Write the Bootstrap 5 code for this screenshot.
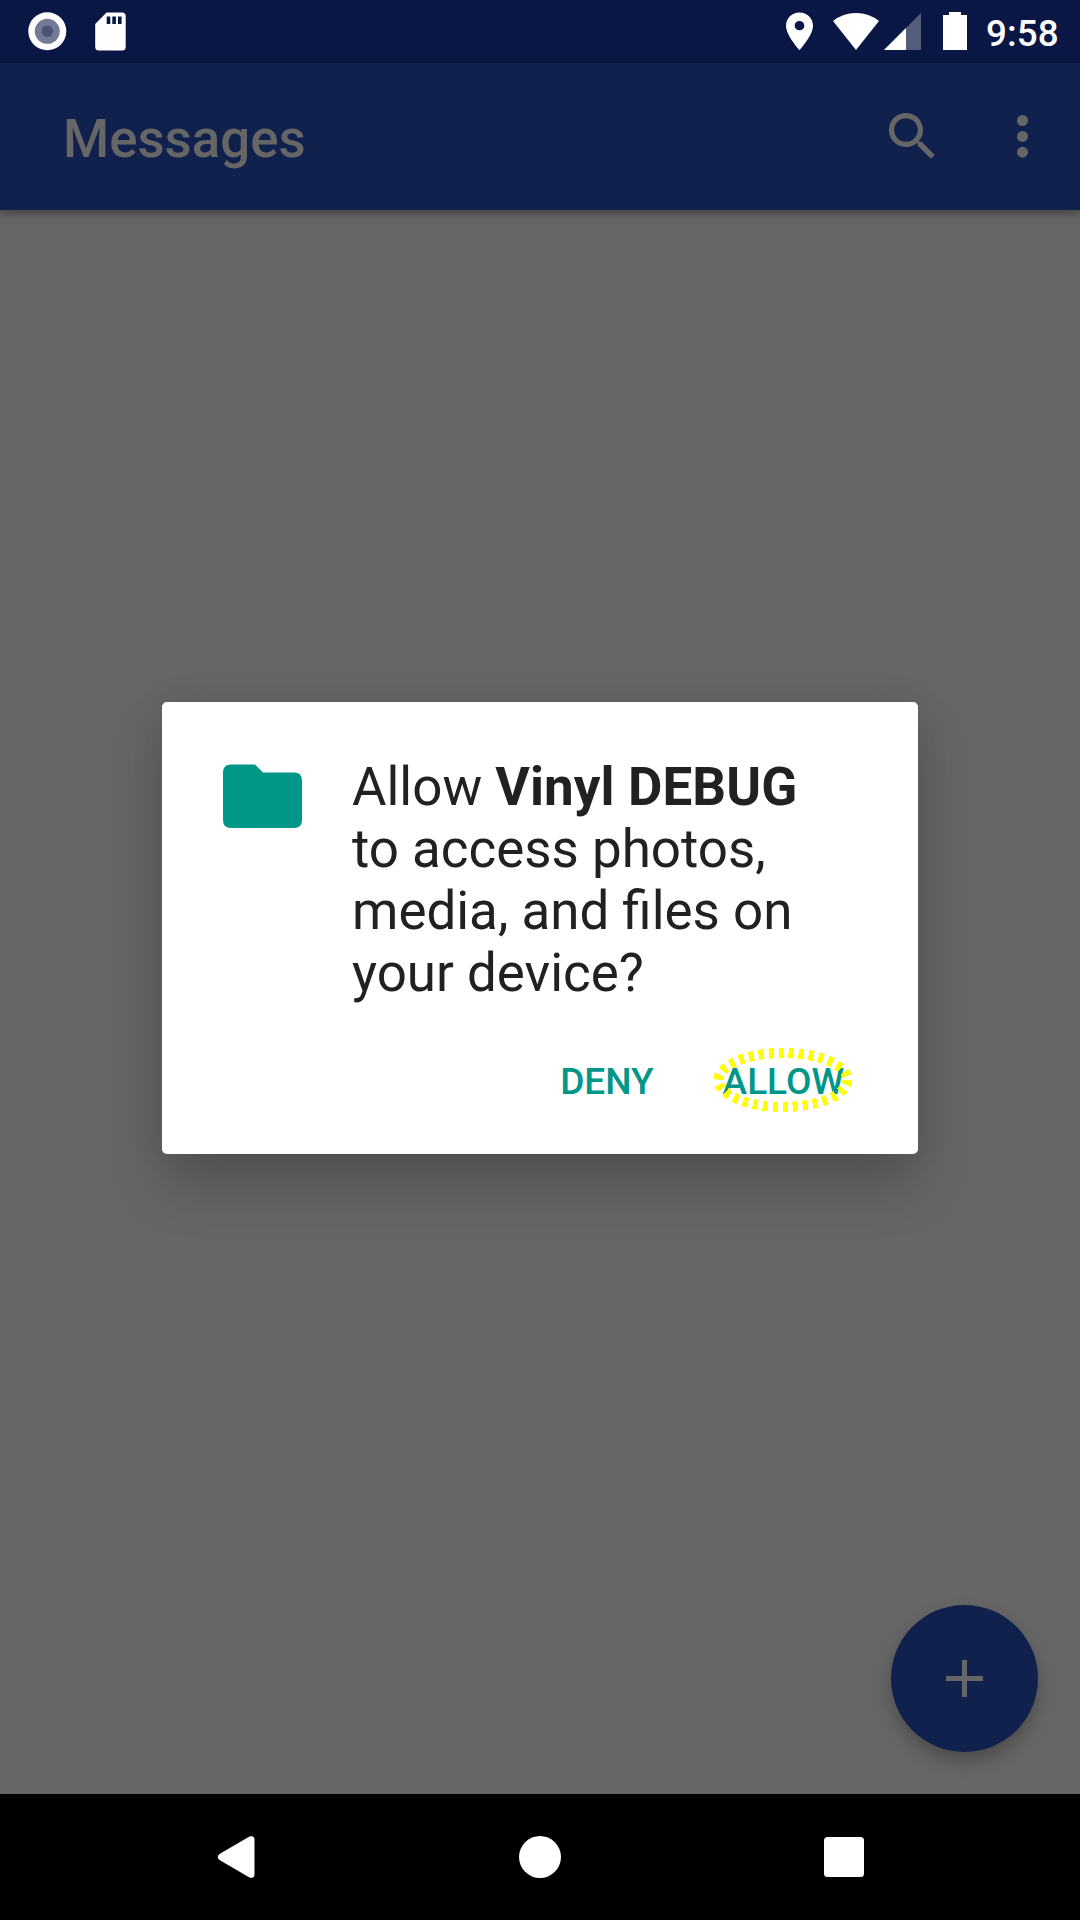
<!DOCTYPE html>
<html lang="en">
<head>
<meta charset="utf-8">
<meta name="viewport" content="width=device-width, initial-scale=1">
<title>Messages</title>
<link href="https://cdn.jsdelivr.net/npm/bootstrap@5.3.0/dist/css/bootstrap.min.css" rel="stylesheet">
<style>
  body { font-family: Roboto, "Liberation Sans", sans-serif; background: #666; color: #212121; }
  svg { display: block; flex: none; }
  .screen { width: 1080px; height: 1920px; }
  .status-bar { height: 63px; background: #0a1644; color: #fff; padding: 0 22px 0 28px; }
  .sys-icon { margin-bottom: 1px; }
  .sd-icon { margin-left: 28px; }
  .wifi-icon { margin-left: 20px; }
  .signal-icon { margin-left: 5px; }
  .battery-icon { margin-left: 22px; }
  .clock { font-size: 36.75px; font-weight: 500; line-height: 43px; padding-top: 4px; margin-left: 19px; width: 72px; letter-spacing: .1px; white-space: nowrap; }
  .app-bar { height: 147px; background: #11214d; color: #666; padding: 0 35px 0 63px; box-shadow: 0 3px 9px rgba(0,0,0,.38); z-index: 1; }
  .app-title { font-size: 52.8px; font-weight: 500; line-height: 62px; padding-top: 4px; }
  .search-icon { margin-right: 56px; }
  .content-area { padding-bottom: 148px; }
  .permission { width: 756px; height: 452px; border-radius: 5px; background: #fff; padding: 53px 53px 0 53px;
    box-shadow: 0 32px 54px rgba(0,0,0,.19), 0 0 36px rgba(0,0,0,.07); }
  .question { font-size: 52.9px; line-height: 62px; width: 480px; margin-left: 42px; padding-top: 1px; }
  .question b { font-weight: 700; letter-spacing: .12px; }
  .action-row { gap: 69px; margin-top: 56px; padding-right: 21px; }
  .action { font-size: 37px; font-weight: 500; line-height: 43px; color: #009688; background: none; border: 0; padding: 0; }
  .highlight { left: -9.5px; top: -13px; pointer-events: none; }
  .fab { right: 42px; bottom: 42px; width: 147px; height: 147px; border: 0; background: #11214d; box-shadow: 0 9px 17px rgba(0,0,0,.26); }
  .nav-keys { height: 126px; background: #000; padding: 0 216px 0 217px; }
</style>
<script src="https://cdn.jsdelivr.net/npm/bootstrap@5.3.0/dist/js/bootstrap.bundle.min.js"></script>
</head>
<body>
<div class="screen d-flex flex-column overflow-hidden">
  <div class="status-bar d-flex align-items-center">
    <svg width="39" height="39" viewBox="0 0 39 39"><circle cx="19.300" cy="19.300" r="19" fill="#fff"/><circle cx="19.300" cy="19.300" r="12.500" fill="#747a96"/><circle cx="19.300" cy="19.300" r="5.700" fill="#4a5277"/></svg>
    <svg class="sd-icon" width="31" height="39" viewBox="0 0 31 39"><path fill="#fff" fill-rule="evenodd" d="M11.500.5H27Q30.700.5 30.700 4V35Q30.700 38.500 27 38.500H4Q.2 38.500.2 35V12ZM11.700 4.500V12H15.300V4.500ZM17.300 4.500V12H20.900V4.500ZM23 4.500V12H26.600V4.500Z"/></svg>
    <svg class="sys-icon ms-auto" width="27" height="38" viewBox="5 1.700 14 20.300" preserveAspectRatio="none"><path fill="#fff" d="M12 2C8.130 2 5 5.130 5 9c0 5.250 7 13 7 13s7-7.750 7-13c0-3.870-3.130-7-7-7zm0 9.500a2.500 2.500 0 1 1 0-5 2.500 2.500 0 0 1 0 5z"/></svg>
    <svg class="sys-icon wifi-icon" width="46" height="38" viewBox="0 0 46 38"><path fill="#fff" d="M0 9Q10 1 23 1T46 9L23 38Z"/></svg>
    <svg class="sys-icon signal-icon" width="37" height="38" viewBox="0 0 37 38"><path fill="#545d7c" d="M37 1V38H0Z"/><path fill="#fff" d="M22 16V38H0Z"/></svg>
    <svg class="sys-icon battery-icon" width="24" height="38" viewBox="0 0 24 38"><path fill="#fff" d="M6 0H18V3H24V38H0V3H6Z"/></svg>
    <div class="clock">9:58</div>
  </div>

  <header class="app-bar d-flex align-items-center position-relative">
    <div class="app-title me-auto">Messages</div>
    <svg class="search-icon" width="63" height="63" viewBox="0 0 24 24"><path fill="#666" d="M15.500 14h-.79l-.28-.27A6.470 6.470 0 0 0 16 9.500 6.500 6.500 0 1 0 9.500 16c1.610 0 3.090-.59 4.230-1.570l.27.28v.79l5 4.990L20.490 19l-4.990-5zm-6 0C7.010 14 5 11.990 5 9.500S7.010 5 9.500 5 14 7.010 14 9.500 11.990 14 9.500 14z"/></svg>
    <svg width="45" height="63" viewBox="0 0 45 63"><g fill="#666"><circle cx="22.500" cy="15.500" r="5.500"/><circle cx="22.500" cy="31.400" r="5.500"/><circle cx="22.500" cy="47.200" r="5.500"/></g></svg>
  </header>

  <main class="content-area flex-fill position-relative d-flex align-items-center justify-content-center">
    <section class="permission d-flex flex-column" role="dialog" aria-label="Permission request">
      <div class="d-flex">
        <svg width="95" height="79" viewBox="0 0 95 79"><path fill="#009688" d="M16 9.500H40L48 17.500H79Q87 17.500 87 25.500V65Q87 73 79 73H16Q8 73 8 65V17.500Q8 9.500 16 9.500Z"/></svg>
        <div class="question">Allow <b>Vinyl DEBUG</b> to access photos, media, and files on your device?</div>
      </div>
      <div class="action-row d-flex justify-content-end">
        <button class="action">DENY</button>
        <button class="action position-relative">ALLOW
          <svg class="highlight position-absolute" width="140" height="66" viewBox="0 0 140 66" shape-rendering="crispEdges"><ellipse cx="70" cy="33" rx="64.500" ry="27" fill="none" stroke="#ff0" stroke-width="10" stroke-dasharray="5 5"/></svg>
        </button>
      </div>
    </section>
    <button class="fab position-absolute rounded-circle d-flex align-items-center justify-content-center p-0" aria-label="New message">
      <svg width="37" height="37" viewBox="0 0 37 37"><path fill="#666" d="M16 0H21V16H37V21H21V37H16V21H0V16H16Z"/></svg>
    </button>
  </main>

  <nav class="nav-keys d-flex align-items-center justify-content-between">
    <svg width="38" height="42" viewBox="0 0 38 42"><path fill="#fff" d="M32.500.6Q37.500-1 37.500 4V38Q37.500 43 32.500 41.400L2.500 24Q-1 21 2.500 18Z"/></svg>
    <svg width="42" height="42" viewBox="0 0 42 42"><circle cx="21" cy="21" r="21" fill="#fff"/></svg>
    <svg width="40" height="40" viewBox="0 0 40 40"><rect width="40" height="40" rx="3.500" fill="#fff"/></svg>
  </nav>
</div>
</body>
</html>
